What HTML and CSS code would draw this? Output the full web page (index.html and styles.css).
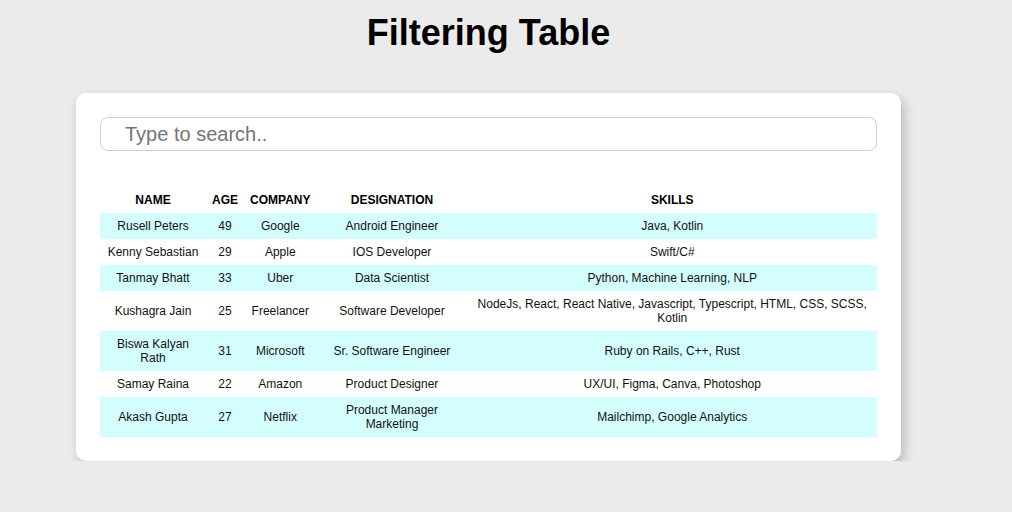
FILE: index.html
```html
<!DOCTYPE html>
<html lang="en">
<head>
<meta charset="utf-8">
<title>Filtering Table</title>
<link rel="stylesheet" href="styles.css">
</head>
<body>
<div class="page">
  <h1 class="title">Filtering Table</h1>
  <div class="card">
    <input class="search" type="text" placeholder="Type to search..">
    <table class="data">
      <thead>
        <tr><th class="col-name">NAME</th><th class="col-age">AGE</th><th class="col-company">COMPANY</th><th class="col-designation">DESIGNATION</th><th>SKILLS</th></tr>
      </thead>
      <tbody>
        <tr><td>Rusell Peters</td><td>49</td><td>Google</td><td>Android Engineer</td><td>Java, Kotlin</td></tr>
        <tr><td>Kenny Sebastian</td><td>29</td><td>Apple</td><td>IOS Developer</td><td>Swift/C#</td></tr>
        <tr><td>Tanmay Bhatt</td><td>33</td><td>Uber</td><td>Data Scientist</td><td>Python, Machine Learning, NLP</td></tr>
        <tr><td>Kushagra Jain</td><td>25</td><td>Freelancer</td><td>Software Developer</td><td>NodeJs, React, React Native, Javascript, Typescript, HTML, CSS, SCSS, Kotlin</td></tr>
        <tr><td>Biswa Kalyan Rath</td><td>31</td><td>Microsoft</td><td>Sr. Software Engineer</td><td>Ruby on Rails, C++, Rust</td></tr>
        <tr><td>Samay Raina</td><td>22</td><td>Amazon</td><td>Product Designer</td><td>UX/UI, Figma, Canva, Photoshop</td></tr>
        <tr><td>Akash Gupta</td><td>27</td><td>Netflix</td><td>Product Manager Marketing</td><td>Mailchimp, Google Analytics</td></tr>
      </tbody>
    </table>
  </div>
</div>
</body>
</html>
```

FILE: styles.css
```css
html, body {
  margin: 0;
  padding: 0;
  background: #ebebeb;
  font-family: "Liberation Sans", Arial, sans-serif;
}
.page {
  width: 825px;
  margin-left: 76px;
}
.title {
  margin: 12px 0 39px;
  font-size: 36px;
  font-weight: bold;
  text-align: center;
  color: #000;
  line-height: normal;
}
.card {
  background: #fff;
  border-radius: 10px;
  box-shadow: 3px 5px 12px rgba(0, 0, 0, 0.22);
  padding: 24px;
}
.search {
  display: block;
  box-sizing: border-box;
  width: 100%;
  height: 34px;
  margin: 0;
  padding: 0 24px;
  border: 1px solid #cfcfcf;
  border-radius: 8px;
  font-family: "Liberation Sans", Arial, sans-serif;
  font-size: 20px;
  color: #222;
  background: #fff;
  outline: none;
}
.search::placeholder {
  color: #757575;
}
.data {
  width: 100%;
  margin-top: 36px;
  border-collapse: collapse;
  font-size: 12px;
  text-align: center;
}
.data th {
  padding: 6px;
  font-weight: bold;
  color: #000;
}
.data td {
  padding: 6px;
  color: #111;
}
.data .col-name {
  width: 94px;
}
.data .col-age {
  width: 26px;
}
.data .col-company {
  width: 60px;
}
.data .col-designation {
  width: 139px;
}
.data tbody tr:nth-child(odd) {
  background: #d4fdfd;
}
```
